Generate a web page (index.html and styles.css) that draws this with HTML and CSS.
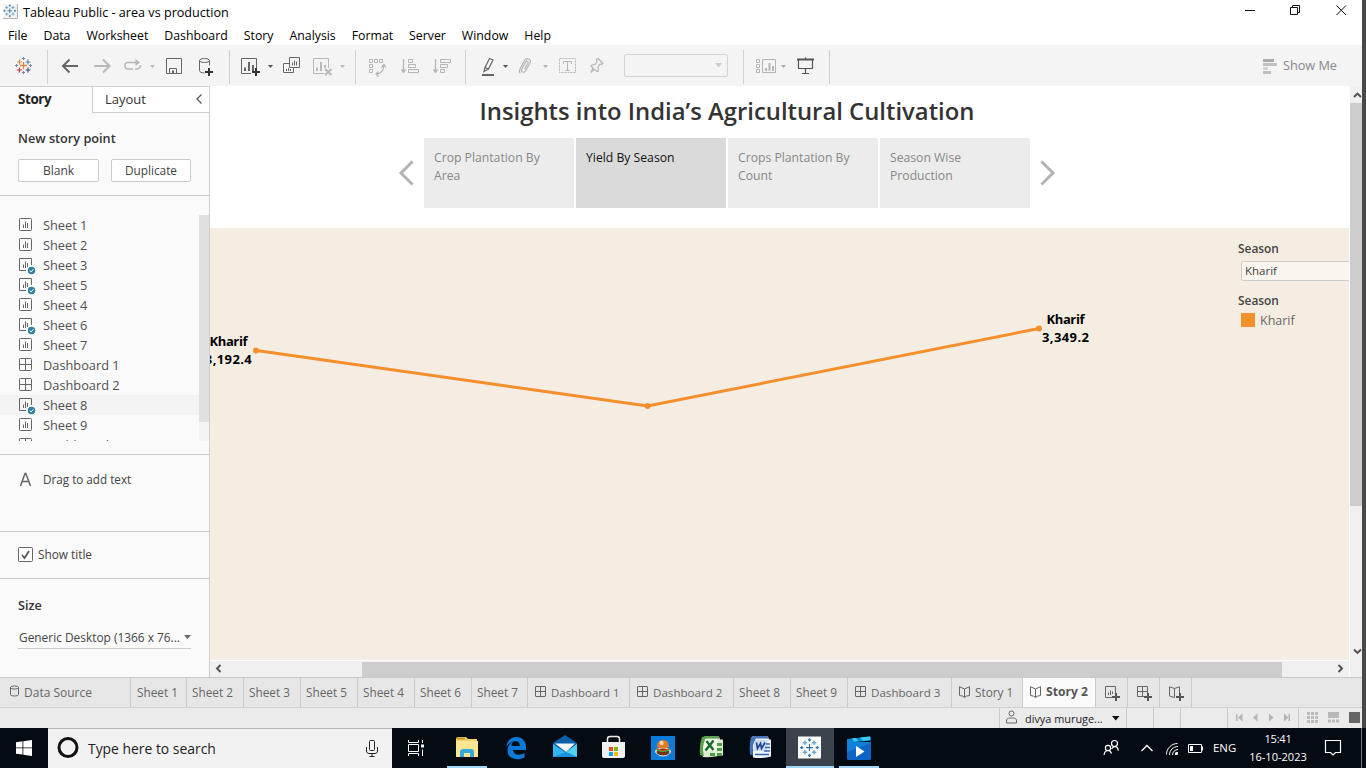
FILE: index.html
```html
<!DOCTYPE html>
<html lang="en">
<head>
<meta charset="utf-8">
<title>Tableau Public - area vs production</title>
<link rel="stylesheet" href="styles.css">
</head>
<body>
<svg class="defs" aria-hidden="true">
  <symbol id="sheet" viewBox="0 0 18 18"><rect x="1.5" y="1.5" width="12" height="12" rx=".8" fill="none" stroke="#666"/><path d="M5.500 11V7.500M7.500 11V4.500M9.500 11V6" stroke="#666"/></symbol>
  <symbol id="used" viewBox="0 0 18 18"><path d="M8 13.500H1.500V1.500H13.500V8" fill="none" stroke="#666"/><path d="M5.500 11V7.500M7.500 11V4.500M9.500 10V6" stroke="#666"/><circle cx="13.500" cy="13.500" r="3.700" fill="#2f7f9f"/><path d="M11.700 13.500l1.400 1.400 2.400-2.700" fill="none" stroke="#fff"/></symbol>
  <symbol id="dash" viewBox="0 0 18 18"><rect x="1.500" y="1.500" width="12" height="12" rx=".8" fill="none" stroke="#666"/><path d="M7.500 1.500v12M1.500 7.500h12" stroke="#666"/></symbol>
  <symbol id="tabdash" viewBox="0 0 12 12"><rect x=".5" y=".5" width="10" height="10" rx=".5" fill="none" stroke="#666"/><path d="M5.500 0v11M0 5.500h11" stroke="#666"/></symbol>
  <symbol id="book" viewBox="0 0 12 12"><path d="M5.500 3v8.500M.5 .7L5.500 3l5-2.300v8.800q-3.500.300-5 1.800-1.500-1.500-5-1.800z" fill="none" stroke="#666"/></symbol>
  <symbol id="mark" viewBox="-8 -8 16 16"><path d="M-2.800 0h5.600M0-2.800v5.600M-1.200-6.200h2.400M0-7.500v2.600M-1.200 6.200h2.400M0 4.900v2.600M-7.500 0h2.600M-6.200-1.200v2.400M4.900 0h2.600M6.200-1.200v2.400" stroke="#2f78a6" stroke-width="1" fill="none"/><path d="M-5.500 -3.800h3.600M-3.700-5.600v3.600M1.900-3.800h3.600M3.700-5.600v3.600M-5.500 3.800h3.600M-3.700 2v3.600M1.900 3.800h3.600M3.700 2v3.600" stroke="#6fa6c8" stroke-width="1.100" fill="none"/></symbol>
</svg>

<div class="window">
  <header class="titlebar">
    <svg class="app-icon" viewBox="0 0 16 16"><path d="M0 0h16v16H0z" fill="#f3f3f3"/><path d="M15.500 0v15.500H0" fill="none" stroke="#aaa"/><use href="#mark" x="0" y="0" width="14.500" height="14.500"/></svg>
    <span class="app-title">Tableau Public - area vs production</span>
    <svg class="win-buttons" viewBox="1240 0 122 24" fill="none" stroke="#111"><path d="M1245 10.500h10M1290.500 7.500h7v7h-7zM1292.500 7v-1.500h7v7H1298M1336.500 5.500l9.500 9.500M1346 5.500l-9.500 9.500"/></svg>
  </header>
  <nav class="menubar"><span>File</span><span>Data</span><span>Worksheet</span><span>Dashboard</span><span>Story</span><span>Analysis</span><span>Format</span><span>Server</span><span>Window</span><span>Help</span></nav>

  <div class="toolbar">
    <svg width="48" viewBox="0 45 48 41" fill="none" stroke-width="1.200"><path d="M20 65.500h7M23.500 62v7" stroke="#e8813a" stroke-width="1.300"/><path d="M17 62h5M19.500 59.500v5" stroke="#dd8f4a"/><path d="M17 70h5M19.500 67.500v5" stroke="#c5373f"/><path d="M25.500 62h5M28 59.500v5" stroke="#5b8d9d"/><path d="M25.500 70h5M28 67.500v5" stroke="#36517f"/><path d="M22 58.500h3M23.500 57v3M22 72.500h3M23.500 71v3M15 65.500h3M16.500 64v3M29 65.500h3M30.500 64v3" stroke="#7188a8" stroke-width="1"/><path d="M47.500 50v34" stroke="#d0d0d0" stroke-width="1"/></svg>
    <svg width="68" viewBox="48 45 68 41" fill="none" stroke-width="2"><path d="M78 66H63M69.500 59.500L63 66l6.500 6.500" stroke="#666"/><path d="M94 66h15M103 59.500l6.500 6.500-6.500 6.500" stroke="#b8b8b8"/></svg>
    <svg width="44" viewBox="116 45 44 41" fill="none"><path d="M133 69h-6a3.500 3.500 0 0 1 0-6.500h10M135 69h2a3.500 3.500 0 0 0 3.500-4" stroke="#b8b8b8" stroke-width="1.500"/><path d="M135.500 59l4.500 3.500-4.500 3.500zM150 65h5l-2.500 3z" fill="#b8b8b8"/></svg>
    <svg width="70" viewBox="160 45 70 41" fill="none" stroke="#666"><path d="M166.500 58.500h15v15h-15zM169.500 73v-4.500h7v4.500"/><path d="M173 70.500v3" stroke-width="2"/><ellipse cx="204.500" cy="60.500" rx="5" ry="2"/><path d="M199.500 60.500v10c0 1.500 2 2.500 5 2.500M209.500 60.500v5"/><path d="M205 72h8M209 68v8" stroke="#333" stroke-width="2"/><path d="M229.500 50v34" stroke="#d0d0d0"/></svg>
    <svg width="126" viewBox="230 45 126 41" fill="none" stroke="#666"><path d="M251 73.500h-9.500v-15h15V68"/><path d="M245 71v-3.500M249 71v-9M253 71v-6" stroke-width="2"/><path d="M252 72h8M256 68v8" stroke="#333" stroke-width="2"/><path d="M268 65h5l-2.500 3z" fill="#555" stroke="none"/><path d="M289.500 57.500h10v10h-10zM289 63.500h-5.500v9h10v-5M292.500 65.500v-3M294.500 65.500v-5M296.500 65.500v-4M286.500 71v-2M288.500 71v-3M290.500 71v-2"/><g stroke="#b8b8b8"><path d="M324 73.500h-10.500v-15h15V68"/><path d="M317 71v-3.500M321 71v-9M325 68v-3" stroke-width="2"/><path d="M325 69l6.500 6M331.500 69l-6.500 6" stroke-width="2"/><path d="M340 65h5l-2.500 3z" fill="#b8b8b8" stroke="none"/></g><path d="M355.500 50v34" stroke="#d0d0d0"/></svg>
    <svg width="110" viewBox="356 45 110 41" fill="none" stroke="#b5b5b5"><path d="M369.500 59.500h3v3h-3zM374.500 59.500h3v3h-3zM379.500 59.500h3v3h-3zM369.500 64.500h3v3h-3zM369.500 69.500h3v3h-3z"/><path d="M376 74c5 0 7.500-3 8-9M378.500 71.500L376 74l2.500 2.500M381.500 67.500l2.500-3 2 3" stroke-width="1.300"/><path d="M403.500 59v13M435.500 59v13" stroke-width="1.300"/><path d="M400.500 69.500h6l-3 4zM432.500 69.500h6l-3 4z" fill="#b5b5b5" stroke="none"/><path d="M408.500 59.500h4v3h-4zM408.500 64.500h7v3h-7zM408.500 69.500h10v3h-10zM440.500 59.500h10v3h-10zM440.500 64.500h7v3h-7zM440.500 69.500h4v3h-4z"/><path d="M465.500 50v34" stroke="#d0d0d0"/></svg>
    <svg width="158" viewBox="466 45 158 41" fill="none" stroke="#b5b5b5"><g stroke="#666"><path d="M489.500 58.500l3.500 1.500-4.500 9-3.500-1.500zM485 67.500l-1 4 4.500-2.500" stroke-width="1.200"/><path d="M482 75h12" stroke-width="2"/><path d="M503 65h5l-2.500 3z" fill="#555" stroke="none"/></g><path d="M520 69l4.500-8.500c2-3.500 7.500-1.500 5.500 2.500l-4.500 8c-1.500 2.500-5 .8-3.800-1.800l4-7.200c1-1.700 3-.5 2.300 1l-3.500 6.500M520 69c-1 2-.5 3.500.5 4" stroke-width="1.200"/><path d="M543 65h5l-2.500 3z" fill="#b5b5b5" stroke="none"/><path d="M559.500 58.500h16v14h-16z" stroke-dasharray="2 1"/><path d="M563.500 64v-2.500h8V64M567.500 62v8M565.500 70.500h4"/><path d="M598 58.500l5 5-1.500 1-1.500-.5-2 3 .5 4-1.500.5-3-2.500-3 3.500 2-4.500-2-2 1-1 3.500-.5 1.500-3.500-.5-1.500z" stroke-width="1.200"/></svg>
    <div class="fit-select"><svg width="8" height="5" viewBox="0 0 8 5"><path d="M0 0h7L3.500 4.500z" fill="#ccc"/></svg></div>
    <svg width="102" viewBox="728 45 102 41" fill="none" stroke="#b5b5b5"><path d="M743.500 50v34M829.500 50v34" stroke="#d0d0d0"/><path d="M756.500 59.500h3v3h-3zM756.500 64.500h3v3h-3zM756.500 69.500h3v3h-3zM762.500 59.500h13v13h-13z"/><path d="M766 71v-3M769.500 71v-8M773 71v-5" stroke-width="2"/><path d="M781 65h5l-2.500 3z" fill="#aaa" stroke="none"/><g stroke="#555"><path d="M797 59.500h17" stroke-width="2"/><path d="M798.500 60v8.500h14V60M805.500 57.500v2M805.500 69v4.500M802 73.500h7" stroke-width="1.200"/></g></svg>
    <div class="show-me"><svg width="14" height="16" viewBox="0 0 14 16"><path d="M0 1h11v3H0z" fill="#aaa"/><path d="M0 5h14v3H0zM0 13h8v3H0z" fill="#bebebe"/><path d="M0 9h5v3H0z" fill="#d4d4d4"/></svg><span>Show Me</span></div>
  </div>

  <main class="workspace">
    <aside class="sidebar">
      <div class="side-tabs"><b>Story</b><div class="layout-tab"><span>Layout</span><svg width="8" height="10" viewBox="0 0 8 10"><path d="M6.500.5L2 5l4.500 4.500" fill="none" stroke="#555" stroke-width="1.300"/></svg></div></div>
      <section class="new-point"><h3>New story point</h3><div class="buttons"><button class="blank">Blank</button><button class="dup">Duplicate</button></div></section>
      <section class="sheet-panel">
        <ul class="sheet-list">
          <li><svg><use href="#sheet"/></svg>Sheet 1</li><li><svg><use href="#sheet"/></svg>Sheet 2</li><li><svg><use href="#used"/></svg>Sheet 3</li><li><svg><use href="#used"/></svg>Sheet 5</li><li><svg><use href="#sheet"/></svg>Sheet 4</li><li><svg><use href="#used"/></svg>Sheet 6</li><li><svg><use href="#sheet"/></svg>Sheet 7</li><li><svg><use href="#dash"/></svg>Dashboard 1</li><li><svg><use href="#dash"/></svg>Dashboard 2</li><li class="hover"><svg><use href="#used"/></svg>Sheet 8</li><li><svg><use href="#sheet"/></svg>Sheet 9</li><li><svg><use href="#dash"/></svg>Dashboard 3</li>
        </ul>
        <div class="list-scroll"><i></i></div>
      </section>
      <section class="drag-text"><svg width="13" height="15" viewBox="0 0 13 15"><path d="M1.500 14L6 1.500h.8L11.500 14M3 9.500h7" fill="none" stroke="#666" stroke-width="1.500"/></svg><span>Drag to add text</span></section>
      <section class="show-title"><svg width="15" height="15" viewBox="0 0 15 15"><rect x=".5" y=".5" width="14" height="14" rx="1" fill="#fff" stroke="#666"/><path d="M4 8l2.500 3L11 4" fill="none" stroke="#555" stroke-width="1.700"/></svg><span>Show title</span></section>
      <section class="size"><h3>Size</h3><div class="size-select"><span>Generic Desktop (1366 x 76...</span><svg width="7" height="4" viewBox="0 0 7 4"><path d="M0 0h7L3.500 4z" fill="#666"/></svg></div></section>
    </aside>

    <div class="story">
      <div class="story-head">
        <h1>Insights into India’s Agricultural Cultivation</h1>
        <div class="navigator">
          <svg width="16" height="26" viewBox="0 0 16 26"><path d="M14.500 1.500L3 13l11.500 11.500" fill="none" stroke="#b3b3b3" stroke-width="3"/></svg>
          <div class="points"><div>Crop Plantation By<br>Area</div><div class="current">Yield By Season</div><div>Crops Plantation By<br>Count</div><div>Season Wise<br>Production</div></div>
          <svg width="16" height="26" viewBox="0 0 16 26"><path d="M1.500 1.500L13 13 1.500 24.500" fill="none" stroke="#b3b3b3" stroke-width="3"/></svg>
        </div>
      </div>
      <div class="canvas">
        <svg class="chart" width="1028" height="432" viewBox="210 228 1028 432">
          <path d="M256.500 350.500L647.500 406 1039 328.500" fill="none" stroke="#f48f2c" stroke-width="3"/>
          <g fill="#f48f2c"><circle cx="256" cy="350.500" r="3"/><circle cx="647.500" cy="406" r="3"/><circle cx="1039" cy="328.500" r="3"/></g>
          <g class="labels"><text x="228.500" y="346" textLength="38">Kharif</text><text x="228.300" y="364" textLength="47">3,192.4</text><text x="1065.500" y="324" textLength="38">Kharif</text><text x="1065.500" y="342" textLength="47">3,349.2</text></g>
        </svg>
        <div class="legend"><h4>Season</h4><div class="filter">Kharif</div><h4>Season</h4><div class="key"><i></i>Kharif</div></div>
      </div>
      <div class="hscroll"><svg width="7" height="9" viewBox="0 0 7 9"><path d="M5.500 1L2 4.500 5.500 8" fill="none" stroke="#505050" stroke-width="1.900"/></svg><i></i><svg width="7" height="9" viewBox="0 0 7 9"><path d="M1.500 1L5 4.500 1.500 8" fill="none" stroke="#505050" stroke-width="1.900"/></svg></div>
    </div>
    <div class="vscroll"><svg width="12" height="17" viewBox="0 0 12 17"><path d="M4 11l3.500-3.500L11 11" fill="none" stroke="#505050" stroke-width="1.900"/></svg><i></i><svg width="12" height="17" viewBox="0 0 12 17"><path d="M4 6.500L7.500 10 11 6.500" fill="none" stroke="#505050" stroke-width="1.900"/></svg></div>
  </main>

  <div class="sheet-tabs">
    <div class="data-source"><svg width="9" height="12" viewBox="0 0 9 12"><path d="M.5 2.500v7c0 2 8 2 8 0v-7c0-2-8-2-8 0s8 2 8 0" fill="none" stroke="#666"/></svg><span>Data Source</span></div>
    <div class="s first"><span>Sheet 1</span></div><div class="s"><span>Sheet 2</span></div><div class="s"><span>Sheet 3</span></div><div class="s"><span>Sheet 5</span></div><div class="s"><span>Sheet 4</span></div><div class="s"><span>Sheet 6</span></div><div class="s seven"><span>Sheet 7</span></div>
    <div class="d one"><svg><use href="#tabdash"/></svg><span>Dashboard 1</span></div><div class="d"><svg><use href="#tabdash"/></svg><span>Dashboard 2</span></div>
    <div class="s"><span>Sheet 8</span></div><div class="s"><span>Sheet 9</span></div><div class="d"><svg><use href="#tabdash"/></svg><span>Dashboard 3</span></div>
    <div class="st"><svg><use href="#book"/></svg><span>Story 1</span></div><div class="st active"><svg><use href="#book"/></svg><span>Story 2</span></div>
    <div class="new"><svg viewBox="0 0 15 15"><path d="M8 11.500H.5V.5h10V7M3.500 9V6.500M5.500 9V4.500M7.500 8V5.500" fill="none" stroke="#666"/><path d="M7 11h8M11 7v8" stroke="#555" stroke-width="2"/></svg></div>
    <div class="new"><svg viewBox="0 0 15 15"><path d="M7 10.500H.5V.5h10V7M5.500 0v10.500M0 5.500h11" fill="none" stroke="#666"/><path d="M7 11h8M11 7v8" stroke="#555" stroke-width="2"/></svg></div>
    <div class="new"><svg viewBox="0 0 15 15"><path d="M5.500 2.500v9L.5 10V.8l5 1.700 5-1.700V7" fill="none" stroke="#666"/><path d="M7 11h8M11 7v8" stroke="#555" stroke-width="2"/></svg></div>
  </div>

  <footer class="statusbar">
    <div class="user"><svg width="11" height="14" viewBox="0 0 11 14"><circle cx="5.500" cy="3.500" r="2.500" fill="none" stroke="#666"/><path d="M.5 13v-2c0-3 2-3 5-3s5 0 5 3v2z" fill="none" stroke="#666"/></svg><span>divya muruge...</span><svg width="8" height="5" viewBox="0 0 8 5"><path d="M0 0h7.500L3.750 4.500z" fill="#111"/></svg></div>
    <i class="cell"></i><i class="cell"></i><i class="cell wide"></i>
    <div class="pager"><svg width="70" height="20" viewBox="1228 708 70 20" fill="#b5b5b5"><path d="M1236 714h1.500v7H1236zM1242.500 713.500v8l-4.500-4zM1257.500 713.500v8l-4.500-4zM1269 713.500v8l4.500-4zM1284 713.500v8l4.500-4zM1288.500 714h1.500v7h-1.500z"/></svg></div>
    <svg width="63" height="20" viewBox="1299 708 63 20"><path d="M1307 713.500h11M1307 717.500h11M1307 721.500h11" stroke="#bbb" stroke-width="3" stroke-dasharray="3 1"/><path d="M1328 712h11v6h-11z" fill="#b8b8b8"/><path d="M1328 721h11" stroke="#bbb" stroke-width="3" stroke-dasharray="3 1"/><path d="M1349 712h11v11h-11z" fill="#666"/></svg>
  </footer>
</div>

<div class="taskbar">
  <div class="start"><svg width="16" height="16" viewBox="0 0 16 16"><path d="M0 2.300L6.500 1.300v6.200H0zM7.300 1.200L16 0v7.500H7.300zM0 8.300h6.500v6.300L0 13.700zM7.300 8.300H16V16l-8.700-1.200z" fill="#fff"/></svg></div>
  <div class="search"><svg width="22" height="22" viewBox="0 0 22 22"><circle cx="11" cy="10.500" r="9" fill="none" stroke="#111" stroke-width="3"/></svg><span>Type here to search</span><svg width="12" height="17" viewBox="0 0 12 17"><rect x="3.500" y=".5" width="5" height="10" rx="1" fill="none" stroke="#222"/><path d="M.5 7v4c0 1.500 1 2.500 2.500 2.500h6c1.500 0 2.500-1 2.500-2.500V7M6 13.500v3M3.500 16.500h5" fill="none" stroke="#222"/></svg></div>
  <div class="apps">
    <svg width="51" height="40" viewBox="392 728 51 40" fill="none" stroke="#fff"><path d="M408.500 740v2.500h10V740M408.500 756v-2.500h10v2.500M408.500 744.500h10v7h-10zM422.500 740v3M422.500 749.500v6.500"/><path d="M421 746h3" stroke-width="3"/></svg>
    <svg width="49" height="40" viewBox="443 728 49 40"><path d="M456 739q0-2 2-2h8l2 2h9v18h-21z" fill="#f5d06e"/><path d="M457 737.500h8v2h-8z" fill="#c59a27"/><path d="M456 741h22v16h-22z" fill="#ffe694"/><path d="M460 757v-5q0-3 3-3h8q3 0 3 3v5h-4v-4h-6v4z" fill="#35a9dc"/><path d="M447 766h40v2h-40z" fill="#9fd7f7"/></svg>
    <svg width="49" height="40" viewBox="492 728 49 40"><path d="M506.500 746.500c.5-5.500 4.500-9.500 10-9.500 6 0 9.500 4.500 9.500 10v3h-13c.4 5 7 6 11.500 3v4.500c-8 4-17 1-17-7 0-4.500 2.500-7.500 6-8.800-1.500 1.500-2 2.600-2 4.300h8.300c0-3.500-1.700-4.800-4.300-4.800-3.700 0-7 2.500-9 5.300z" fill="#0a79d8"/></svg>
    <svg width="48" height="40" viewBox="541 728 48 40"><path d="M553 743l12-8 12 8v14h-24z" fill="#0860a8"/><path d="M553 744l13 9 11-9v13h-24z" fill="#32b6ee"/><path d="M555 743.500h20l-9 8.500z" fill="#f4f4f4"/><path d="M566 752l11-8v13z" fill="#4fd0f4"/><path d="M553 757l13-5 11 5z" fill="#1a91df"/></svg>
    <svg width="49" height="40" viewBox="589 728 49 40"><path d="M607.500 742v-3q0-2.500 2.500-2.500h7q2.500 0 2.500 2.500v3" fill="none" stroke="#eee" stroke-width="1.500"/><path d="M602 742h23v14q0 2-2 2h-19q-2 0-2-2z" fill="#f1f1f1"/><path d="M609 747h4v4h-4z" fill="#e94b25"/><path d="M614 747h4v4h-4z" fill="#7cb900"/><path d="M609 752h4v4h-4z" fill="#00a3ee"/><path d="M614 752h4v4h-4z" fill="#ffb900"/></svg>
    <svg width="49" height="40" viewBox="638 728 49 40"><path d="M651 736h24v24h-24z" fill="#087cdb"/><ellipse cx="663" cy="751.500" rx="8" ry="4" fill="#f5eee0"/><ellipse cx="663" cy="752" rx="6.500" ry="3.500" fill="#6e3418"/><path d="M657 754q6 3 12 0-2 2.500-6 2.500t-6-2.500z" fill="#e9e4d8"/><path d="M656 748q7 5 14 0v2q-7 4-14 0z" fill="#4eb143"/><path d="M657 747q0-7 6-7t6 7q-6 3-12 0z" fill="#e57a28"/><circle cx="661.500" cy="743" r="2.200" fill="#ffd9a1"/><path d="M657 749q6 3 12 0" stroke="#e8342c" fill="none"/></svg>
    <svg width="49" height="40" viewBox="687 728 49 40"><path d="M704 736.500h15l1 3h3v16l-4 .5q-8 1.500-16 1-4-9 1-20.500z" fill="#dcebd2"/><path d="M702 737q8-1.500 17-.5v2h-13q-5 8-2 17.500l-4-1q-1-9 2-18z" fill="#5aa14c"/><path d="M705 739h13v12h-15z" fill="#eef7e8"/><path d="M706.500 741l7 9M713.500 740.500l-8 10" stroke="#176b28" stroke-width="2.400"/><path d="M717 743h5v3h-5zM717 748h5v3h-5zM710 753h5v3h-5zM717 753h5v3h-5z" fill="#4e9e46"/></svg>
    <svg width="50" height="40" viewBox="736 728 50 40"><path d="M752 736.500h16l1 3h2v17q-9 2.500-18 1z" fill="#edf4fd"/><path d="M751 737q8-1.500 17-.5v2h-12q-5 8-3 17l-3-1q-1-9 1-17.500z" fill="#4374bd"/><path d="M755 740h12v11h-14z" fill="#c9dbf1"/><path d="M756.500 742.500l1 6 3-5 1 5 3.500-6" fill="none" stroke="#183f90" stroke-width="1.600"/><path d="M766 744h4M765 747.500h5M764 751h6M755 754.500h14" stroke="#3565ad" stroke-width="1.500"/></svg>
    <svg class="current-app" width="48" height="40" viewBox="786 728 48 40"><path d="M798 736.500h23v22h-23z" fill="#fafafa"/><use href="#mark" x="799.500" y="737.500" width="20" height="20"/><path d="M786 766h48v2h-48z" fill="#9fd7f7"/></svg>
    <svg width="50" height="40" viewBox="834 728 50 40"><path d="M847 742h24v16q0 2-2 2h-20q-2 0-2-2z" fill="#127fd9"/><path d="M847 752l24-9v15q0 2-2 2h-20q-2 0-2-2z" fill="#0f65c5"/><path d="M847 739l23-2.500q1 0 1 1v3l-24 2.500z" fill="#0b84d6"/><path d="M852 738.500l4-.5 2 3-4 .5zM860 737.600l10-1.100v3.600l-7 .8z" fill="#39ccf1"/><path d="M856 746l8.500 5.500-8.500 5.500z" fill="#fff"/><path d="M839 766h40v2h-40z" fill="#9fd7f7"/></svg>
  </div>
  <svg class="tray" width="112" height="40" viewBox="1096 728 112 40" fill="none" stroke="#fff"><circle cx="1114.500" cy="743.500" r="3" stroke-width="1.200"/><circle cx="1108" cy="748" r="2.600" stroke-width="1.200"/><path d="M1104 755c.5-3 2-4.500 4-4.500s3 1 3.500 3M1111.500 749c1-1.600 2-2.300 3.500-2.300 2 0 3 1.500 3.300 4" stroke-width="1.200"/><path d="M1141.500 751l5.500-5.500 5.500 5.500" stroke-width="1.300"/><path d="M1166.500 754.500c0-6 5-11 11-11M1169.500 755c0-5 4-8.500 8.500-8.500M1172.500 755c0-3 2.500-5.500 5.500-5.500M1175.500 755c0-1.500 1-2.500 2.500-2.500"/><circle cx="1176.500" cy="753.500" r="1.500" fill="#fff" stroke="none"/><path d="M1188.500 744.500h13v8h-13zM1202.500 746.500v4"/><path d="M1190 746h3v5h-3z" fill="#fff" stroke="none"/></svg>
  <span class="lang">ENG</span>
  <div class="clock"><span class="time">15:41</span><span class="date">16-10-2023</span></div>
  <svg width="46" height="40" viewBox="1320 728 46 40" fill="none" stroke="#fff"><path d="M1325.500 740.500h15v12h-5l-2.500 2.500-2.500-2.500h-5z" stroke-width="1.200"/><path d="M1361.500 728v40" stroke="#777"/></svg>
</div>
</body>
</html>
```
FILE: styles.css
```css
*{box-sizing:border-box}
body{margin:0;width:1366px;height:768px;overflow:hidden;background:#fff;font-family:"Open Sans","Noto Sans",sans-serif;font-size:12px;color:#444;white-space:nowrap}
h1,h3,h4,ul{margin:0;padding:0;font-weight:600}
svg{display:block;flex:none}
.defs{display:none}
.window{height:728px;border-right:4px solid #494949;display:flex;flex-direction:column}
.titlebar{height:24px;display:flex;align-items:center;padding-left:3px;color:#000}
.app-icon{width:15px;height:15px;margin-bottom:2px}
.app-title{margin-left:5px;font-size:12.600px}
.win-buttons{width:122px;height:24px;margin-left:auto}
.menubar{height:21px;display:flex;gap:16px;padding-left:8px;line-height:24px;font-size:12.300px;color:#000}
.toolbar{height:41px;background:#f4f4f4;display:flex;align-items:center}
.toolbar>svg{height:41px}
.fit-select{width:104px;height:23px;border:1px solid #d2d2d2;border-radius:2px;display:flex;align-items:center;justify-content:flex-end;padding-right:4px}
.show-me{margin-left:auto;margin-right:25px;display:flex;align-items:center;gap:6px;font-size:12.700px;color:#888}
.show-me span{margin-bottom:2px}
.workspace{height:591px;display:flex}
.sidebar{width:210px;background:#fafafa;border-right:1px solid #cfcfcf;border-top:1px solid #cfcfcf;display:flex;flex-direction:column}
.sidebar section{border-bottom:1px solid #cbcbcb}
.sidebar h3{font-size:12.700px;color:#333}
.side-tabs{height:26px;display:flex;align-items:center}
.side-tabs b{width:92px;padding:0 0 2px 18px;font-size:13.400px;font-weight:700;color:#222;letter-spacing:-.4px}
.layout-tab{height:26px;flex:1;background:#fff;border-left:1px solid #cfcfcf;border-bottom:1px solid #cfcfcf;display:flex;align-items:center;justify-content:space-between;padding:0 6px 2px 12px;font-size:13px;color:#333}
.new-point{height:83px;padding-top:15px}
.new-point h3{padding-left:18px;line-height:20px}
.buttons{display:flex;gap:12px;margin:11px 18px 0}
.buttons button{height:23px;padding:0;border:1px solid #ccc;border-radius:2px;background:#fff;color:#444;font:12px/20px "Open Sans",sans-serif}
.blank{width:81px}
.buttons .dup{width:80px;font-size:11.800px;padding-bottom:2px}
.sidebar .sheet-panel{height:259px;padding:19px 0 13px;display:flex}
.sheet-list{list-style:none;flex:1;height:226px;overflow:hidden;font-size:12.800px;font-weight:400;color:#505050}
.sheet-list li{height:20px;display:flex;align-items:center;padding-left:18px;gap:7px}
.sheet-list svg{width:18px;height:18px;margin-top:2px}
.sheet-list .hover{background:#f4f4f4}
.list-scroll{width:10px;height:226px;background:#f4f4f4}
.list-scroll i{display:block;height:207px;background:#e0e0e0}
.drag-text{height:77px;display:flex;gap:11px;padding:16px 0 0 19px;font-size:11.700px}
.drag-text svg{margin-top:1px}
.show-title{height:47px;display:flex;align-items:center;gap:5px;padding-left:18px;font-size:11.800px}
.show-title svg{margin-top:-1px}
.show-title span{margin-bottom:2px}
.sidebar .size{border:0;padding:16px 18px 0}
.size h3{line-height:20px}
.size-select{height:23px;margin-top:11px;border-bottom:1px solid #ccc;display:flex;align-items:center;justify-content:space-between;padding-left:1px;padding-bottom:1px;font-size:11.900px}
.story{width:1139px}
.story-head{height:142px;padding-top:7px}
.story h1{font-size:23.850px;line-height:36px;height:45px;color:#333;text-align:center;padding-right:106px;padding-left:1px;font-weight:600}
.navigator{display:flex;align-items:center;gap:10px;padding-left:188px}
.navigator>svg{margin-bottom:1px}
.points{display:flex;gap:2px}
.points div{width:150px;height:70px;background:#ececec;padding:11px 10px;font-size:12.200px;line-height:18px;color:#888}
.points .current{background:#dadada;color:#111}
.canvas{height:432px;background:#f6ede2;display:flex;overflow:hidden}
.labels{font-size:13px;font-weight:700;fill:#000;text-anchor:middle}
.legend{width:111px;padding-top:10px}
.legend h4{font-size:11.900px;line-height:20px;height:23px;font-weight:600;color:#444}
.filter{height:20px;margin:0 -4px 9px 3px;padding-left:3px;border:1px solid #ccc;border-radius:2px;background:#faf5ee;font-size:11.500px;line-height:18px}
.legend .filter+h4{height:22px}
.key{display:flex;align-items:center;gap:5px;padding-left:3px;height:16px;font-size:12.500px;color:#666}
.key i{width:14px;height:14px;background:#f48f2c}
.hscroll{height:16px;margin-top:1px;background:#f0f0f0;display:flex;align-items:center;padding:0 5px}
.hscroll svg{margin-bottom:1px}
.hscroll i{width:920px;height:15px;background:#cdcdcd;margin-left:140px;margin-right:auto}
.vscroll{flex:1;border-left:1px solid #fff;background:#f0f0f0;display:flex;flex-direction:column}
.vscroll i{height:403px;background:#cdcdcd;margin-bottom:auto}
.vscroll svg:last-child{margin-bottom:17px}
.sheet-tabs{height:31px;background:#e6e6e6;border-top:1px solid #c9c9c9;border-bottom:1px solid #cfcfcf;display:flex;font-size:11.800px;color:#666}
.sheet-tabs div{display:flex;align-items:center;border-right:1px solid #cacaca;height:29px;padding-bottom:1px}
.data-source{width:131px;padding-left:10px;gap:5px;font-size:12px}
.data-source svg{margin-bottom:2px}
.s{width:57px;padding-left:5px}
.s.first,.s.seven{width:56px}
.s.first{padding-left:6px}
.d{width:104px;padding-left:7px;gap:4px;font-size:11.600px}
.d.one{width:102px;font-size:11.450px}
.d svg,.st svg{width:12px;height:12px}
.st{width:71px;padding-left:7px;gap:4px}
.sheet-tabs .active{width:73px;background:#fafafa;color:#555;font-weight:700;font-size:12.100px}
.active span{margin-bottom:2px}
.new{width:32px;padding-left:9px}
.new svg{width:15px;height:15px;margin-top:2px}
.statusbar{height:20px;background:#ebebeb;display:flex;padding-left:999px}
.user{width:128px;border-left:1px solid #cacaca;border-right:1px solid #cacaca;display:flex;align-items:center;padding-left:6px;color:#222;font-size:10.900px}
.user span{margin:0 9px 0 8px}
.user svg:first-child{margin-bottom:3px}
.cell{width:27px;border-right:1px solid #cacaca}
.cell.wide{width:47px}
.pager{width:71px;border-right:1px solid #cacaca}
.taskbar{height:40px;background:#050b13;display:flex;align-items:center;color:#fff}
.start{width:48px;display:flex;justify-content:center}
.search{width:344px;height:40px;background:#f2f2f2;border-top:1px solid #b5b5b5;display:flex;align-items:center;padding:0 14px 1px 9px;color:#222;font-size:13.900px}
.search span{flex:1;margin-left:9px}
.apps{display:flex}
.current-app{background:#3b424b}
.tray{margin-left:212px}
.lang{width:36px;padding:0 0 2px 5px;font-size:11.400px}
.clock{width:76px;text-align:center;font-size:11.050px;line-height:18px;display:flex;flex-direction:column;padding-right:8px}
.time{letter-spacing:-.2px}
```
